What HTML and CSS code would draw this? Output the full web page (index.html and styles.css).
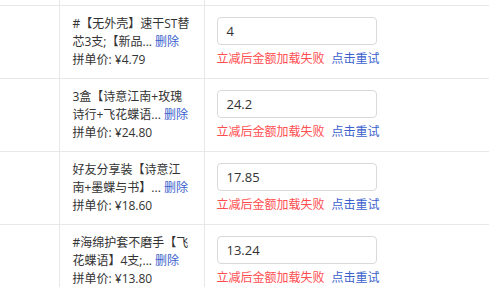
FILE: index.html
```html
<!DOCTYPE html>
<html>
<head>
<meta charset="utf-8">
<link rel="stylesheet" href="styles.css">
</head>
<body>
<table class="grid">
  <tr class="prev">
    <td class="blank"></td><td class="info"></td><td class="price"></td>
  </tr>
  <tr>
    <td class="blank"></td>
    <td class="info">
      <div class="line">#【无外壳】速干ST替</div>
      <div class="line">芯3支;【新品... <a class="link">删除</a></div>
      <div class="line">拼单价: ¥4.79</div>
    </td>
    <td class="price">
      <div class="box">4</div>
      <div class="err">立减后金额加载失败<a class="link retry">点击重试</a></div>
    </td>
  </tr>
  <tr>
    <td class="blank"></td>
    <td class="info">
      <div class="line">3盒【诗意江南+玫瑰</div>
      <div class="line">诗行+飞花蝶语... <a class="link">删除</a></div>
      <div class="line">拼单价: ¥24.80</div>
    </td>
    <td class="price">
      <div class="box">24.2</div>
      <div class="err">立减后金额加载失败<a class="link retry">点击重试</a></div>
    </td>
  </tr>
  <tr>
    <td class="blank"></td>
    <td class="info">
      <div class="line">好友分享装【诗意江</div>
      <div class="line">南+墨蝶与书】... <a class="link">删除</a></div>
      <div class="line">拼单价: ¥18.60</div>
    </td>
    <td class="price">
      <div class="box">17.85</div>
      <div class="err">立减后金额加载失败<a class="link retry">点击重试</a></div>
    </td>
  </tr>
  <tr>
    <td class="blank"></td>
    <td class="info">
      <div class="line">#海绵护套不磨手【飞</div>
      <div class="line">花蝶语】4支;... <a class="link">删除</a></div>
      <div class="line">拼单价: ¥13.80</div>
    </td>
    <td class="price">
      <div class="box">13.24</div>
      <div class="err">立减后金额加载失败<a class="link retry">点击重试</a></div>
    </td>
  </tr>
</table>
</body>
</html>
```
FILE: styles.css
```css
html, body {
  margin: 0;
  padding: 0;
  background: #fff;
  overflow: hidden;
  height: 287px;
}
body {
  font-family: "Open Sans", "Noto Sans CJK SC", sans-serif;
  font-size: 12px;
  color: #333;
}
.grid {
  border-collapse: collapse;
  width: 100%;
  table-layout: fixed;
}
.grid td {
  border-bottom: 1px solid #e8e8e8;
  border-right: 1px solid #e8e8e8;
  vertical-align: top;
  padding: 0;
  height: 72px;
  box-sizing: border-box;
}
.grid tr.prev td {
  height: 5px;
  padding: 0;
}
.grid td.blank {
  width: 59px;
}
.grid td.info {
  width: 145px;
  padding: 9px 0 9px 13px;
}
.grid td.price {
  padding: 11px 0 0 12px;
  border-right: none;
}
.line {
  line-height: 18px;
  white-space: nowrap;
}
.link {
  color: #3a5fcd;
  cursor: pointer;
}
.box {
  width: 160px;
  height: 28px;
  box-sizing: border-box;
  border: 1px solid #d9d9d9;
  border-radius: 4px;
  padding-left: 9px;
  line-height: 26px;
  font-size: 13px;
  color: #333;
}
.err {
  color: #ff4d4f;
  line-height: 18px;
  margin-top: 5px;
  white-space: nowrap;
}
.retry {
  margin-left: 7px;
}
```
